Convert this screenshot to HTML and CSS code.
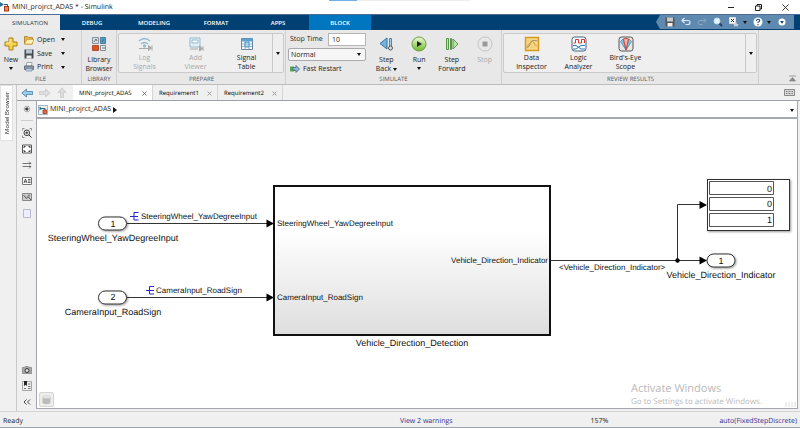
FILE: index.html
```html
<!DOCTYPE html>
<html lang="en">
<head>
<meta charset="utf-8">
<title>MINI_projrct_ADAS * - Simulink</title>
<link rel="stylesheet" href="styles.css">
</head>
<body>
<div class="app">
  <header class="titlebar">
    <svg class="logo" width="10" height="10" viewBox="0 0 10 10"><path d="M0 0l4 2.500-4 2.500z" fill="#2b7196"/><path d="M4 2.500h3.500v3" fill="none" stroke="#357"/><rect x="4.500" y="4.500" width="4" height="4.500" fill="#e58a5a" stroke="#a5371d"/></svg>
    <h1>MINI_projrct_ADAS * - Simulink</h1>
    <div class="peek"></div>
    <div class="window-buttons">
      <button aria-label="Minimize"><svg width="7" height="7" viewBox="0 0 7 7"><path d="M0 3.500h6" stroke="#222" fill="none"/></svg></button>
      <button aria-label="Restore"><svg width="7" height="7" viewBox="0 0 7 7"><path d="M.5 2h4.500v4.500H.5zM2 2V.5h4.500V5H5" stroke="#222" fill="none"/></svg></button>
      <button aria-label="Close"><svg width="7" height="7" viewBox="0 0 7 7"><path d="M.5.5l6 6m0-6l-6 6" stroke="#222" fill="none" stroke-width=".9"/></svg></button>
    </div>
  </header>

  <nav class="ribbon-tabs">
    <button class="active">SIMULATION</button><button>DEBUG</button><button>MODELING</button><button>FORMAT</button><button>APPS</button><button class="context">BLOCK</button>
    <div class="quick">
      <button aria-label="Save"><svg width="10" height="10" viewBox="0 0 10 10"><path d="M.5.5h9v9h-9z" fill="#555"/><path d="M2 .5h6v4H2z" fill="#c6cbd0"/><path d="M2.500 6h5v3.500h-5z" fill="#eee"/></svg></button>
      <button aria-label="Undo"><svg width="10" height="10" viewBox="0 0 10 10"><path d="M3.500 1L1 3.500 3.500 6M1.500 3.500H7q2 0 2 2t-2 2H4.500" fill="none" stroke="#d9ebfb" stroke-width="1.200"/></svg></button>
      <button aria-label="Redo"><svg width="10" height="10" viewBox="0 0 10 10"><path d="M6.500 1L9 3.500 6.500 6M8.500 3.500H3q-2 0-2 2t2 2h2.500" fill="none" stroke="#89a9c5"/></svg></button>
      <button aria-label="Find"><svg width="10" height="10" viewBox="0 0 10 10"><path d="M6 6l3 3" stroke="#233f60" stroke-width="1.800"/><circle cx="4" cy="4" r="3" fill="#e4f5ff" stroke="#c3dcf0"/></svg></button>
      <button class="wide" aria-label="Shortcuts"><svg width="10" height="10" viewBox="0 0 10 10"><path d="M.5.5h6v6h-6z" fill="#fff" stroke="#ddd"/><path d="M2 2l3 3m0-3L2 5" stroke="#222"/><path d="M7 5l1 2 2 .3-1.500 1.200.3 1.500L7 9l-2 1 .5-1.500L4 7.300 6 7z" fill="#c4d3e0"/></svg><i class="caret"></i></button>
      <button class="wide" aria-label="Help"><svg width="10" height="10" viewBox="0 0 10 10"><circle cx="5" cy="5" r="4.500" fill="#fff"/><path d="M3.500 4q0-1.700 1.600-1.700T6.700 3.700Q6.700 4.500 5 5.300V6M5 7v1.200" fill="none" stroke="#174a7d" stroke-width="1.100"/></svg><i class="caret"></i></button>
      <button aria-label="Ribbon options"><svg width="10" height="10" viewBox="0 0 10 10"><circle cx="5" cy="5" r="3.500" fill="#fff"/><path d="M3.200 4h3.600L5 6.800z" fill="#123e6c"/></svg></button>
    </div>
  </nav>

  <section class="ribbon">
    <div class="group file">
      <div class="tools">
        <button class="tool new"><svg width="16" height="16" viewBox="0 0 16 16"><path d="M6 2h4v4h4v4h-4v4H6v-4H2V6h4z" fill="#f9d34a" stroke="#a97f19"/><path d="M7 3v4H3" stroke="#fff2b0" fill="none"/></svg><span>New</span><i class="caret"></i></button>
        <div class="stack">
          <button><svg width="10" height="10" viewBox="0 0 10 10"><path d="M.5 9V1.500h3l1 1h4V9z" fill="#e3b64c" stroke="#b98a2c"/><path d="M.5 9L3 4.500h7L8 9z" fill="#fff0b5" stroke="#c59b3d" stroke-width=".7"/></svg><span>Open</span><i class="caret"></i></button>
          <button><svg width="10" height="10" viewBox="0 0 10 10"><path d="M.5.5h9v9h-9z" fill="#444b54"/><path d="M2 .5h6v4H2z" fill="#bcc5cf"/><path d="M2.500 6.500h5v3h-5z" fill="#eee"/></svg><span>Save</span><i class="caret"></i></button>
          <button><svg width="10" height="10" viewBox="0 0 10 10"><path d="M2 4l1-3.500h5L7.500 4z" fill="#f5f8fb" stroke="#8493a3" stroke-width=".8"/><path d="M.5 4h9v3.500h-9z" fill="#8c9aa8" stroke="#56616c" stroke-width=".8"/><path d="M2 6.500h6V9H2z" fill="#b9d5ee" stroke="#697a8a" stroke-width=".6"/></svg><span>Print</span><i class="caret"></i></button>
        </div>
      </div>
      <h2>FILE</h2>
    </div>
    <div class="group library">
      <div class="tools"><button class="tool"><svg width="16" height="16" viewBox="0 0 16 16"><g stroke-width=".8"><path d="M1.500 1.500h6v6h-6z" fill="#d7dde2" stroke="#747f88"/><path d="M9.500 1.500h5v6h-5z" fill="#4fa0cb" stroke="#31698a"/><path d="M1.500 9.500h6v5h-6z" fill="#da5428" stroke="#a33a18"/><path d="M9.500 9.500h5v5h-5z" fill="#e7edf1" stroke="#647581"/></g><path d="M3 6l2-3 1 2m5 1l2-3M11 12h3" stroke="#555" fill="none" stroke-width=".8"/></svg><span>Library<br>Browser</span></button></div>
      <h2>LIBRARY</h2>
    </div>
    <div class="group prepare">
      <div class="tools gallery">
        <button class="tool" disabled><svg width="16" height="16" viewBox="0 0 16 16"><g fill="none" stroke="#8fb9cf" stroke-width="1.300"><path d="M2 5q5.500-5 11 0M4 8q3.500-3 7 0"/><circle cx="7.500" cy="10" r="1"/></g><path d="M2 12.500h9M11.500 9.500v5l3-2.500zM15 9.500v5" stroke="#aaa" fill="#aaa"/></svg><span>Log<br>Signals</span></button>
        <button class="tool" disabled><svg width="16" height="16" viewBox="0 0 16 16"><path d="M2 2h10v9H2z" fill="#e5f0f6" stroke="#8fb9cf"/><path d="M4 4h6v3H4z" fill="#fff" stroke="#8fb9cf"/><path d="M2 13h8M11.500 10v5l3-2.500zM15 10v5" stroke="#aaa" fill="#aaa"/></svg><span>Add<br>Viewer</span></button>
        <button class="tool"><svg width="16" height="16" viewBox="0 0 16 16"><path d="M2.500 2.500h11v11h-11z" fill="#fff" stroke="#6585a0"/><path d="M2.500 2.500h11v3h-11z" fill="#5ba0cf"/><path d="M6 5v8M10 5v8M3 8h10M3 10.500h10" stroke="#9bb5c9"/><path d="M6 6h4v5H6z" fill="#a9d2ee" stroke="#4b98ce"/></svg><span>Signal<br>Table</span></button>
        <button class="more" aria-label="More prepare tools"><i class="caret"></i></button>
      </div>
      <h2>PREPARE</h2>
    </div>
    <div class="group simulate">
      <div class="tools">
        <div class="settings">
          <div class="line"><label for="stop">Stop Time</label><input id="stop" type="text" value="10"></div>
          <div class="select"><select aria-label="Simulation mode"><option>Normal</option></select><i class="caret"></i></div>
          <button class="fast"><svg width="10" height="8" viewBox="0 0 10 8"><path d="M0 1.500h4v5H0z" fill="#58a94a"/><path d="M3 2.500h3V.5L9.500 4 6 7.500v-2H3z" fill="#8fb6d5" stroke="#3c6688" stroke-width=".8"/></svg><span>Fast Restart</span></button>
        </div>
        <button class="tool"><svg width="16" height="16" viewBox="0 0 16 16"><path d="M9 2v11L2 7.500z" fill="#74b4de" stroke="#32719c"/><path d="M11.500 2.500h2v9h-2z" fill="#a5cde8" stroke="#32719c" stroke-width=".8"/><circle cx="12.500" cy="12" r="2" fill="#ddd" stroke="#555"/></svg><span>Step<br>Back <i class="caret"></i></span></button>
        <button class="tool run"><svg width="16" height="16" viewBox="0 0 16 16"><defs><linearGradient id="g" x2="0" y2="1"><stop stop-color="#f0fbd8"/><stop offset="1" stop-color="#69ba2e"/></linearGradient></defs><circle cx="8" cy="8" r="7" fill="url(#g)" stroke="#6b9e44"/><path d="M6 5l5 3-5 3z" fill="#222"/></svg><span>Run</span><i class="caret"></i></button>
        <button class="tool"><svg width="16" height="16" viewBox="0 0 16 16"><path d="M2.500 2.500h2v11h-2zM6.500 2.500h1v11h-1zM9 3v10l5-5z" fill="#b7e7a1" stroke="#498c38" stroke-width=".9"/></svg><span>Step<br>Forward</span></button>
        <button class="tool" disabled><svg width="16" height="16" viewBox="0 0 16 16"><circle cx="8" cy="8" r="7" fill="#e8e8e8" stroke="#c5c5c5"/><path d="M5.500 5.500h5v5h-5z" fill="#999"/></svg><span>Stop</span></button>
      </div>
      <h2>SIMULATE</h2>
    </div>
    <div class="group review">
      <div class="tools gallery">
        <button class="tool"><svg width="16" height="16" viewBox="0 0 16 16"><path d="M1.500 1.500h13v13h-13z" fill="#f9dc8b" stroke="#d59a20" stroke-width="1.500"/><path d="M4 2v12M7 2v12M10 2v12M2 5h12M2 8h12M2 11h12" stroke="#eec765" stroke-width=".6"/><path d="M2.500 12q3-1 4-5t7-2" fill="none" stroke="#888" stroke-width=".8"/><path d="M2.500 11L7 6q2-2 3 1t3 3" fill="none" stroke="#d68a45" stroke-width=".8"/></svg><span>Data<br>Inspector</span></button>
        <button class="tool"><svg width="16" height="16" viewBox="0 0 16 16"><rect x="1" y="1" width="14" height="14" rx="2.500" fill="#f7fbff" stroke="#49637d"/><path d="M2.500 7h2V3.500h3V7h3V3.500h3V7" fill="none" stroke="#d7372b"/><path d="M2 9.500h3l5 3.500h4M2 13h3l5-3.500h4" fill="none" stroke="#2c7eb7"/></svg><span>Logic<br>Analyzer</span></button>
        <button class="tool"><svg width="16" height="16" viewBox="0 0 16 16"><rect x="1" y="1" width="14" height="14" rx="2.500" fill="#e7e7e7" stroke="#555"/><path d="M8 14L2.500 5.500 5 3z" fill="#8dc5e7" stroke="#3181ad" stroke-width=".7"/><path d="M8 14l5.500-8.500L11 3z" fill="#8dc5e7" stroke="#3181ad" stroke-width=".7"/><path d="M8 14L5.500 3q2.500-1.500 5 0z" fill="#f4b5a5" stroke="#cf4535"/></svg><span>Bird's-Eye<br>Scope</span></button>
        <button class="more" aria-label="More results tools"><i class="caret"></i></button>
      </div>
      <h2>REVIEW RESULTS</h2>
    </div>
    <div class="group last"><button aria-label="Collapse ribbon"><svg width="7" height="7" viewBox="0 0 7 7"><path d="M0 1h7M3.500 2.500L6.500 6h-6z" fill="#888" stroke="#888" stroke-width=".8"/></svg></button></div>
  </section>

  <main class="workspace">
    <aside class="browser"><button>Model Browser</button></aside>
    <div class="editor">
      <nav class="doc-tabs">
        <div class="arrows">
          <button aria-label="Back"><svg width="12" height="10" viewBox="0 0 12 10"><path d="M.8 5l4.700-4v2.500h6v3h-6V9z" fill="#95cdea" stroke="#4b7fa1" stroke-width=".8"/></svg></button>
          <button aria-label="Forward"><svg width="12" height="10" viewBox="0 0 12 10"><path d="M11.200 5L6.500 1v2.500h-6v3h6V9z" fill="#ddd" stroke="#c9c9c9" stroke-width=".8"/></svg></button>
          <button aria-label="Up"><svg width="10" height="11" viewBox="0 0 10 11"><path d="M5 .8L1 5.500h2.500v5h3v-5H9z" fill="#ddd" stroke="#c9c9c9" stroke-width=".8"/></svg></button>
        </div>
        <div class="tab active"><a href="#m">MINI_projrct_ADAS</a><button aria-label="Close model"><svg width="5" height="5" viewBox="0 0 5 5"><path d="M.5.5l4 4m0-4l-4 4" stroke="#555" stroke-width=".8"/></svg></button></div>
        <div class="tab"><a href="#r1">Requirement1</a><button aria-label="Close Requirement1"><svg width="5" height="5" viewBox="0 0 5 5"><path d="M.5.5l4 4m0-4l-4 4" stroke="#888" stroke-width=".8"/></svg></button></div>
        <div class="tab"><a href="#r2">Requirement2</a><button aria-label="Close Requirement2"><svg width="5" height="5" viewBox="0 0 5 5"><path d="M.5.5l4 4m0-4l-4 4" stroke="#888" stroke-width=".8"/></svg></button></div>
        <button class="keyboard" aria-label="Keyboard"><svg width="11" height="7" viewBox="0 0 11 7"><path d="M.5.5h10v6H.5z" fill="#ddd" stroke="#888"/><path d="M2 2.500h7M2 4.500h7" stroke="#777" stroke-dasharray="1 .5"/></svg></button>
      </nav>
      <div class="panes">
        <div class="palette">
          <button aria-label="Hide browser"><svg width="10" height="10" viewBox="0 0 10 10"><circle cx="5" cy="5" r="2.800" fill="#fff" stroke="#888" stroke-width=".7"/><path d="M3.200 5L5.300 3.500v3zM5 5h2" fill="#222" stroke="#222" stroke-width=".7"/></svg></button>
          <hr>
          <button aria-label="Zoom"><svg width="10" height="10" viewBox="0 0 10 10"><path d="M.5 2.500v-2h2M7.500.5h2v2M.5 7.500v2h2" stroke="#777" fill="none" stroke-width=".8"/><circle cx="4.800" cy="4.800" r="2.800" fill="#fff" stroke="#333"/><path d="M3.300 4.800h3M4.800 3.300v3M7 7l2.500 2.500" stroke="#333"/></svg></button>
          <button aria-label="Fit to view"><svg width="10" height="10" viewBox="0 0 10 10"><path d="M.5 1h9v8h-9z" fill="#fff" stroke="#555"/><path d="M2 4V2.500h1.500M6.500 2.500H8V4M8 6v1.500H6.500M3.500 7.500H2V6" stroke="#333" fill="none"/></svg></button>
          <button aria-label="Signals"><svg width="10" height="10" viewBox="0 0 10 10"><path d="M.5 3.500h8M.5 6.500h8M7 1.500l2 2-2 .5M7 8.500l2-2L7 6" fill="none" stroke="#555" stroke-width=".8"/></svg></button>
          <button aria-label="Annotation"><svg width="10" height="10" viewBox="0 0 10 10"><path d="M.5 1.500h9v7h-9z" fill="#fff" stroke="#777"/><path d="M2 7l1.500-4L5 7M2.500 5.800h2M6 3.500h2.500M6 5h2.500M6 6.500h2.500" fill="none" stroke="#333" stroke-width=".8"/></svg></button>
          <button aria-label="Image"><svg width="10" height="10" viewBox="0 0 10 10"><path d="M.5 1.500h9v7h-9z" fill="#ccc" stroke="#888"/><path d="M1.500 3l3 3.500 1.500-2L9 8" fill="none" stroke="#555"/><circle cx="7" cy="3.500" r="1" fill="#777"/></svg></button>
          <button aria-label="Area"><svg width="10" height="10" viewBox="0 0 10 10"><path d="M1.500 1.500h7v8h-7z" fill="#eeeefe" stroke="#aaaac5" stroke-width=".8"/></svg></button>
          <span class="push"></span>
          <button aria-label="Snapshot"><svg width="10" height="10" viewBox="0 0 10 10"><path d="M.5 2.500h2l.8-1h3l.8 1h2.400v6h-9z" fill="#aaa" stroke="#777" stroke-width=".7"/><circle cx="5" cy="5.500" r="2" fill="#ddd" stroke="#333"/></svg></button>
          <button aria-label="Bookmarks"><svg width="10" height="10" viewBox="0 0 10 10"><path d="M.5.5h9v9h-9z" fill="#eee" stroke="#888" stroke-width=".7"/><path d="M2 0h3v5L3.500 3.800 2 5z" fill="#222"/><path d="M6 3h2.500M2 7.500h2M6 7.500h2.500M6 5.500h2.500" stroke="#777"/></svg></button>
          <button aria-label="Collapse palette"><svg width="10" height="10" viewBox="0 0 10 10"><path d="M4.500 2.500L2 5l2.500 2.500M8 2.500L5.500 5 8 7.500" fill="none" stroke="#333" stroke-width=".9"/></svg></button>
        </div>
        <div class="view">
          <div class="crumbs"><svg width="10" height="10" viewBox="0 0 10 10"><path d="M.5.5h9v9h-9z" fill="#eaf3f8" stroke="#8199a8" stroke-width=".7"/><path d="M1.500 1.500l3 2-3 2z" fill="#2b7196"/><path d="M4 3.500h3V5" stroke="#357" fill="none"/><path d="M5 5h3.500v3.500H5z" fill="#e46c35" stroke="#a5371d" stroke-width=".8"/></svg><a href="#m">MINI_projrct_ADAS</a><i class="caret right"></i><button aria-label="Path menu"><i class="caret"></i></button></div>
          <div class="canvas">
            <svg class="diagram" width="760" height="288" viewBox="37 119 760 288">
              <defs><linearGradient id="block" x2="0" y2="1"><stop offset=".3" stop-color="#fff"/><stop offset="1" stop-color="#dedede"/></linearGradient>
              <filter id="shadow" x="-20%" y="-20%" width="150%" height="150%"><feDropShadow dx="1" dy="1" stdDeviation=".8" flood-opacity=".4"/></filter></defs>
              <g class="wire"><path d="M127 223.500h143M127 297.500h143M551 260.500h152M677.500 260.500v-56h25"/></g>
              <g><path d="M266.500 219.500l7.500 4-7.500 4zM266.500 293.500l7.500 4-7.500 4zM699.500 256.500l7.500 4-7.500 4zM699.500 201l7.500 4-7.500 4z"/><circle cx="677.500" cy="260.500" r="2.200"/></g>
              <g class="shape" filter="url(#shadow)"><rect x="98.500" y="217" width="28" height="13" rx="6.500"/><rect x="98.500" y="291" width="28" height="13" rx="6.500"/><rect x="707" y="254" width="28" height="13" rx="6.500"/><rect x="707.500" y="179.500" width="82" height="51"/></g>
              <rect x="274" y="186" width="276" height="149" fill="url(#block)" stroke="#111" stroke-width="2"/>
              <g class="cell"><path d="M709.500 181.500h64v13h-64zM709.500 197.500h64v13h-64zM709.500 213.500h64v13h-64z"/></g>
              <g class="tag"><path d="M130 216.500h8M138.500 212.500H134v7.500h4.500M146 290.500h8M154 286.500h-4.500v7.500h4.500"/></g>
              <g class="name"><text x="113" y="241">SteeringWheel_YawDegreeInput</text><text x="113" y="315">CameraInput_RoadSign</text><text x="412" y="346">Vehicle_Direction_Detection</text><text x="721" y="278">Vehicle_Direction_Indicator</text></g>
              <g class="port"><text x="141" y="219">SteeringWheel_YawDegreeInput</text><text x="156" y="293">CameraInput_RoadSign</text><text x="277" y="226">SteeringWheel_YawDegreeInput</text><text x="277" y="300">CameraInput_RoadSign</text><text class="out" x="548" y="263">Vehicle_Direction_Indicator</text><text x="559" y="270">&lt;Vehicle_Direction_Indicator&gt;</text></g>
              <g class="name"><text x="113" y="227">1</text><text x="113" y="300">2</text><text x="721" y="264">1</text></g>
              <g class="value"><text x="772" y="192">0</text><text x="772" y="207">0</text><text x="772" y="223">1</text></g>
            </svg>
            <button class="badge" aria-label="Data"><svg width="9" height="10" viewBox="0 0 9 10"><path d="M.5 2v6q4 2.500 8 0V2z" fill="#bbb"/><ellipse cx="4.500" cy="2" rx="4" ry="1.500" fill="#e5e5e5" stroke="#ccc" stroke-width=".5"/></svg></button>
            <div class="watermark"><strong>Activate Windows</strong><span>Go to Settings to activate Windows.</span></div>
            <div class="grip"></div>
          </div>
        </div>
      </div>
    </div>
  </main>

  <footer class="status"><span>Ready</span><a href="#w">View 2 warnings</a><span>157%</span><a href="#s">auto(FixedStepDiscrete)</a></footer>
</div>
</body>
</html>
```
FILE: styles.css
```css
* { box-sizing: border-box; }
body { margin: 0; font: 7px/10px "Open Sans", "Noto Sans", sans-serif; color: #222; background: #f0f0f0; text-rendering: geometricPrecision; }
button { display: flex; align-items: center; justify-content: center; padding: 0; border: 0; background: none; font: inherit; color: inherit; }
a { color: inherit; text-decoration: none; }
h1, h2 { margin: 0; font: inherit; }
svg { display: block; flex: none; }
.app { display: flex; flex-direction: column; min-height: 100vh; }
.caret { display: inline-block; border: 2px solid transparent; border-top: 3px solid #111; border-bottom: 0; flex: none; }
.caret.right { border: 3px solid transparent; border-left: 4px solid #111; border-right: 0; }

.titlebar { position: relative; display: flex; align-items: center; height: 14px; background: #fff; color: #222; }
.logo { margin-right: 2px; }
.titlebar h1 { padding-top: 1px; }
.peek { position: absolute; left: 329px; top: 0; width: 141px; height: 1px; background: linear-gradient(90deg, #72aee6 28px, #eee 28px); }
.window-buttons { display: flex; gap: 20px; margin-left: auto; padding-right: 11px; }

.ribbon-tabs { display: flex; height: 16px; padding: 0 6px 0 0; background: #004073; color: #fff; border-top: 1px solid #4b6c94; }
.ribbon-tabs > button { width: 62px; font-size: 6px; font-weight: 600; }
.ribbon-tabs > .active { width: 60px; margin-right: 1px; background: #ececec; color: #333; font-weight: 400; }
.ribbon-tabs > .context { background: #0076c0; }
.quick { display: flex; align-items: center; justify-content: space-between; width: 138px; margin: 0 0 1px auto; padding: 0 7px 0 9px; background: #5f89af; clip-path: polygon(4px 0, 100% 0, 100% 100%, 4px 100%, 0 50%); }
.quick .wide { gap: 4px; }

.ribbon { display: flex; height: 55px; background: #e8e8e8; border-bottom: 1px solid #bcbcbc; }
.group { display: flex; flex-direction: column; flex: none; border-right: 1px solid #cfcfcf; }
.group h2 { height: 10px; padding-top: 1px; line-height: 9px; font-size: 6px; color: #555; text-align: center; }
.tools { display: flex; flex: 1; min-height: 0; }
.tool { flex-direction: column; justify-content: flex-start; flex: 1; padding-top: 6px; line-height: 9px; gap: 3px; }
.tool:disabled { color: #aaa; }
.file { width: 82px; }
.library { width: 35px; }
.prepare { width: 169px; padding-left: 1px; }
.simulate { width: 216px; }
.review { width: 257px; padding-left: 1px; }
.last { flex: 1; justify-content: flex-end; align-items: flex-end; border: 0; padding: 0 4px 2px 0; }
.new { flex: none; width: 22px; }
.stack { display: flex; flex-direction: column; padding: 3px 0 0 2px; }
.stack button { height: 14px; justify-content: flex-start; gap: 3px; }
.stack span { min-width: 21px; text-align: left; }
.gallery { margin: 3px 1px 1px 0; border: 1px solid #cacaca; border-radius: 2px; background: #efefef; }
.gallery .tool { flex: 0 0 51px; padding-top: 2px; gap: 1px; }
.review .gallery { padding-left: 4px; }
.review .gallery .tool { flex-basis: 47px; }
.more { width: 11px; margin-left: auto; border-left: 1px solid #cacaca; }
.settings { display: flex; flex-direction: column; gap: 2px; width: 80px; margin-right: 4px; padding: 3px 0 0 2px; }
.line { display: flex; align-items: center; justify-content: space-between; padding-left: 2px; }
.line input { width: 38px; height: 13px; padding: 0 3px; border: 1px solid #b5b5b5; background: #fff; font: inherit; color: inherit; }
.select { position: relative; }
.select select { display: block; width: 100%; height: 13px; padding: 0 2px; border: 1px solid #aaa; border-radius: 2px; background: #f6f6f6; appearance: none; font: inherit; color: inherit; }
.select .caret { position: absolute; right: 5px; top: 5px; }
.fast { justify-content: flex-start; gap: 3px; height: 13px; padding-left: 2px; }

.workspace { display: flex; flex: 1; }
.browser { width: 17px; border-right: 1px solid #c8c8c8; }
.browser button { width: 13px; height: 56px; background: #fff; writing-mode: vertical-rl; transform: rotate(180deg); border: 1px solid #e2e2e2; white-space: nowrap; font-size: 6px; }
.editor { display: flex; flex-direction: column; flex: 1; min-width: 0; }
.doc-tabs { display: flex; height: 16px; border-bottom: 1px solid #9ca0a8; font-size: 6px; }
.arrows { display: flex; align-items: center; gap: 6px; width: 56px; padding-left: 4px; }
.tab { display: flex; align-items: center; justify-content: space-between; min-width: 65px; padding: 1px 5px 0 6px; border-right: 1px solid #d5d5d5; color: #000; }
.tab.active { min-width: 80px; background: #fff; }
.keyboard { margin-left: auto; padding-right: 5px; }
.panes { display: flex; flex: 1; padding: 0 2px 2px 0; }
.palette { display: flex; flex-direction: column; align-items: center; gap: 6px; width: 19px; padding: 3px 0 2px; }
.palette hr { width: 12px; margin: 0 0 1px; border: 0; border-top: 1px solid #ccc; }
.push { flex: 1; }
.view { display: flex; flex-direction: column; flex: 1; min-width: 0; border: solid #a3a6b0; border-width: 0 1px 1px; }
.crumbs { display: flex; align-items: center; gap: 2px; height: 18px; padding: 2px 3px 0 1px; background: #fff; border-bottom: 2px solid #a6a9ae; }
.crumbs button { margin-left: auto; }
.canvas { position: relative; flex: 1; background: #fff; overflow: hidden; }
.diagram { font-family: "Liberation Sans", Arial, sans-serif; }
.diagram text { fill: #111; }
.wire path, .tag path { fill: none; stroke: #333; }
.tag path { stroke: #2525c8; }
.shape rect { fill: #fff; stroke: #333; }
.cell path { fill: #fff; stroke: #555; }
.name { font-size: 9px; text-anchor: middle; }
.port { font-size: 8px; }
.port .out { text-anchor: end; }
.value { font-size: 9px; text-anchor: end; }
.badge { position: absolute; left: 2px; bottom: 1px; width: 15px; height: 15px; border: 1px solid #d5d5d5; border-radius: 2px; background: #eee; }
.watermark { position: absolute; right: 35px; bottom: 0; display: flex; flex-direction: column; color: #b9b9b9; font-size: 8px; line-height: 12px; }
.watermark strong { font-size: 11px; font-weight: 400; line-height: 14px; }
.grip { position: absolute; right: 1px; bottom: 1px; width: 11px; height: 5px; background: repeating-linear-gradient(90deg, #eee 0 2px, #fff 2px 3px); }

.status { display: grid; grid-template-columns: 50% 24% 1fr auto; align-items: center; height: 17px; padding: 4px 3px 0; border-top: 1px solid #d5d5d5; border-bottom: 1px solid #9da4ac; }
.status a { color: #2e3192; }
```
